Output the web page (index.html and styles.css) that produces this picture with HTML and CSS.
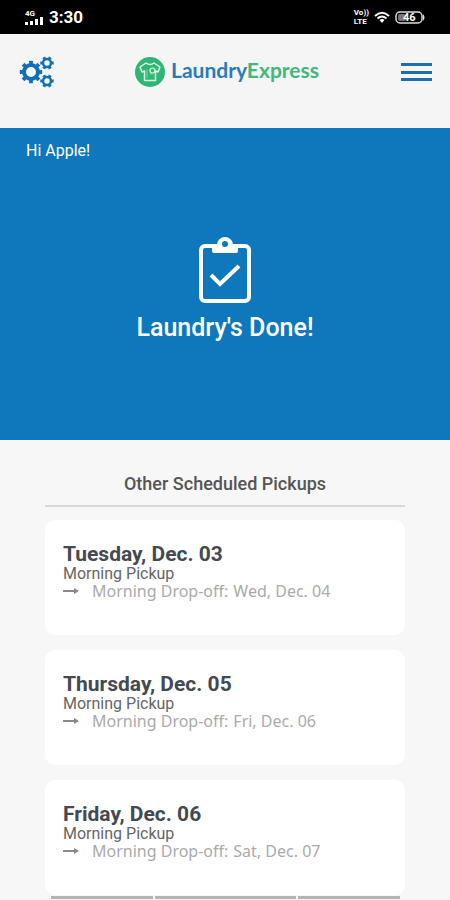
FILE: index.html
```html
<!DOCTYPE html>
<html lang="en">
<head>
  <meta charset="UTF-8" />
  <meta name="viewport" content="width=device-width, initial-scale=1" />
  <title>LaundryExpress</title>
  <link rel="stylesheet" href="styles.css">
</head>
<body>
  <div class="status-bar">
    <div class="status-left">
      <div class="signal">
        <span class="network">4G</span>
        <svg width="19" height="8" viewBox="0 0 19 8" fill="#fff">
          <rect x="0" y="5" width="3" height="3" />
          <rect x="5" y="4" width="3" height="4" />
          <rect x="10" y="2" width="3" height="6" />
          <rect x="15" y="0" width="3" height="8" />
        </svg>
      </div>
      <span class="time">3:30</span>
    </div>
    <div class="status-right">
      <div class="volte"><span>Vo))</span><span>LTE</span></div>
      <svg width="16" height="13" viewBox="0 0 16 13" fill="none" stroke="#fff" stroke-width="2">
        <path d="M1 5 Q8 -1.5 15 5" />
        <path d="M3.5 7.5 Q8 3.5 12.5 7.5" />
        <path d="M5.5 9 Q8 7 10.5 9 L8 12 Z" fill="#fff" stroke="none" />
      </svg>
      <div class="battery">
        <svg width="31" height="13" viewBox="0 0 31 13">
          <rect x="1" y="1" width="26" height="11" rx="4" fill="none" stroke="#ddd" stroke-width="1.5" />
          <rect x="3" y="3" width="8" height="7" rx="2" fill="#777" />
          <path d="M28 3 Q31 6.5 28 10 Z" fill="#ddd" />
        </svg>
        <span>46</span>
      </div>
    </div>
  </div>

  <header class="header">
    <button class="icon-btn" aria-label="Settings">
      <svg width="35" height="32" viewBox="0 0 35 32" fill="none" stroke="#136fb3">
        <circle cx="12" cy="16" r="7" stroke-width="4" />
        <circle cx="12" cy="16" r="9.5" stroke-width="3.5" pathLength="16" stroke-dasharray="1 1" stroke-dashoffset="0.5" />
        <circle cx="28" cy="7" r="4" stroke-width="2.5" />
        <circle cx="28" cy="7" r="5.5" stroke-width="2.5" pathLength="12" stroke-dasharray="1 1" stroke-dashoffset="0.5" />
        <circle cx="28" cy="25" r="4" stroke-width="2.5" />
        <circle cx="28" cy="25" r="5.5" stroke-width="2.5" pathLength="12" stroke-dasharray="1 1" stroke-dashoffset="0.5" />
      </svg>
    </button>
    <a href="#" class="logo">
      <svg width="30" height="30" viewBox="0 0 30 30">
        <circle cx="15" cy="15" r="15" fill="#2fb673" />
        <path d="M11 6 Q15 9 19 6 L25 10 L23 15 L20.5 14 V23.5 H9.5 V14 L7 15 L5 10 Z" fill="none" stroke="#dcf5e7" stroke-width="1.5" stroke-linejoin="round" />
        <circle cx="17.5" cy="13.5" r="2.5" fill="none" stroke="#dcf5e7" stroke-width="1.2" />
        <path d="M12 12 V21 M15 17 H18" stroke="#7fd6a8" stroke-width="1" />
      </svg>
      <span class="logo-text">Laundry<span class="green">Express</span></span>
    </a>
    <button class="icon-btn" aria-label="Menu">
      <svg width="32" height="20" viewBox="0 0 32 20" fill="#1b6fae">
        <rect x="1" y="1" width="31" height="3" />
        <rect x="1" y="9" width="31" height="3" />
        <rect x="1" y="16" width="31" height="3" />
      </svg>
    </button>
  </header>

  <section class="hero">
    <p class="greeting">Hi Apple!</p>
    <svg class="clipboard" width="54" height="68" viewBox="0 0 54 68" fill="none" stroke="#fff">
      <rect x="3" y="10" width="48" height="55" rx="4" stroke-width="4" />
      <path d="M14 9 H19 A8 8 0 0 1 35 9 H40 V15 Q40 17 38 17 H16 Q14 17 14 15 Z" fill="#fff" stroke="none" />
      <circle cx="27" cy="8" r="3" fill="#0f78bc" stroke="none" />
      <path d="M13 39 L22 48 L41 30" stroke-width="4" />
    </svg>
    <h1>Laundry's Done!</h1>
  </section>

  <main class="pickups">
    <h2>Other Scheduled Pickups</h2>
    <div class="card">
      <h3>Tuesday, Dec. 03</h3>
      <p class="pickup">Morning Pickup</p>
      <p class="dropoff">
        <svg width="16" height="8" viewBox="0 0 16 8"><path d="M0 4 H12" stroke="#888" stroke-width="2" /><path d="M11 1 L16 4 L11 7 Z" fill="#888" /></svg>
        <span>Morning Drop-off:</span>
        <span>Wed, Dec. 04</span>
      </p>
    </div>
    <div class="card">
      <h3>Thursday, Dec. 05</h3>
      <p class="pickup">Morning Pickup</p>
      <p class="dropoff">
        <svg width="16" height="8" viewBox="0 0 16 8"><path d="M0 4 H12" stroke="#888" stroke-width="2" /><path d="M11 1 L16 4 L11 7 Z" fill="#888" /></svg>
        <span>Morning Drop-off:</span>
        <span>Fri, Dec. 06</span>
      </p>
    </div>
    <div class="card">
      <h3>Friday, Dec. 06</h3>
      <p class="pickup">Morning Pickup</p>
      <p class="dropoff">
        <svg width="16" height="8" viewBox="0 0 16 8"><path d="M0 4 H12" stroke="#888" stroke-width="2" /><path d="M11 1 L16 4 L11 7 Z" fill="#888" /></svg>
        <span>Morning Drop-off:</span>
        <span>Sat, Dec. 07</span>
      </p>
    </div>
  </main>

  <div class="bottom-bar">
    <span></span>
    <span></span>
    <span></span>
  </div>
</body>
</html>
```
FILE: styles.css
```css
* {
  box-sizing: border-box;
}

body {
  font-family: Roboto, sans-serif;
  background: #f7f7f7;
  margin: 0;
  color: #444a50;
}

h1, h2, h3, p {
  margin: 0;
}

.status-bar {
  display: flex;
  justify-content: space-between;
  align-items: center;
  height: 34px;
  padding: 0 24px 0 25px;
  background: #000;
  color: #fff;
}

.status-left,
.status-right {
  display: flex;
  align-items: center;
  gap: 5px;
}

.signal {
  display: flex;
  flex-direction: column;
}

.network {
  font-size: 8px;
  line-height: 7px;
  font-weight: 700;
}

.time {
  font-size: 17px;
  font-weight: 700;
}

.volte {
  display: flex;
  flex-direction: column;
  font-size: 8px;
  line-height: 9px;
  font-weight: 700;
}

.battery {
  position: relative;
  display: flex;
}

.battery span {
  position: absolute;
  left: 8px;
  top: 0;
  font-size: 11px;
  line-height: 13px;
  font-weight: 700;
}

.header {
  display: flex;
  justify-content: space-between;
  align-items: center;
  height: 94px;
  padding: 0 18px 18px 19px;
  background: #f5f5f5;
}

.icon-btn {
  display: flex;
  padding: 0;
  border: none;
  background: none;
  cursor: pointer;
}

.logo {
  display: flex;
  align-items: center;
  gap: 6px;
  text-decoration: none;
}

.logo-text {
  padding-bottom: 4px;
  font-family: Lato, sans-serif;
  font-size: 21px;
  line-height: 26px;
  font-weight: 700;
  color: #2b7bb9;
}

.green {
  color: #41b87c;
}

.hero {
  display: flex;
  flex-direction: column;
  align-items: center;
  min-height: 312px;
  padding: 13px 26px;
  background: #0f78bc;
  color: #fff;
}

.greeting {
  align-self: flex-start;
  font-size: 16px;
  line-height: 20px;
}

.clipboard {
  margin-top: 75px;
}

.hero h1 {
  margin-top: 10px;
  font-size: 25px;
  line-height: 28px;
  font-weight: 500;
}

.pickups {
  padding: 32px 45px 0;
}

.pickups h2 {
  margin-bottom: 13px;
  padding-bottom: 9px;
  border-bottom: 2px solid #d8d8d8;
  font-size: 18px;
  line-height: 24px;
  font-weight: 500;
  text-align: center;
  color: #555;
}

.card {
  min-height: 115px;
  margin-bottom: 15px;
  padding: 22px 18px;
  background: #fff;
  border-radius: 10px;
}

.card:last-child {
  margin-bottom: 0;
}

.card h3 {
  font-size: 21px;
  line-height: 24px;
  font-weight: 700;
}

.pickup {
  font-size: 16px;
  line-height: 16px;
  color: #666;
}

.dropoff {
  display: flex;
  align-items: center;
  font-family: "Noto Sans", sans-serif;
  font-size: 16px;
  line-height: 18px;
  color: #aaa;
}

.dropoff svg {
  margin-right: 13px;
}

.dropoff span {
  margin-right: 5px;
}

.bottom-bar {
  display: grid;
  grid-template-columns: 102fr 141fr 102fr;
  gap: 2px;
  margin-top: 1px;
  padding: 0 50px 0 51px;
}

.bottom-bar span {
  height: 3px;
  background: #b5b5b5;
}
```
